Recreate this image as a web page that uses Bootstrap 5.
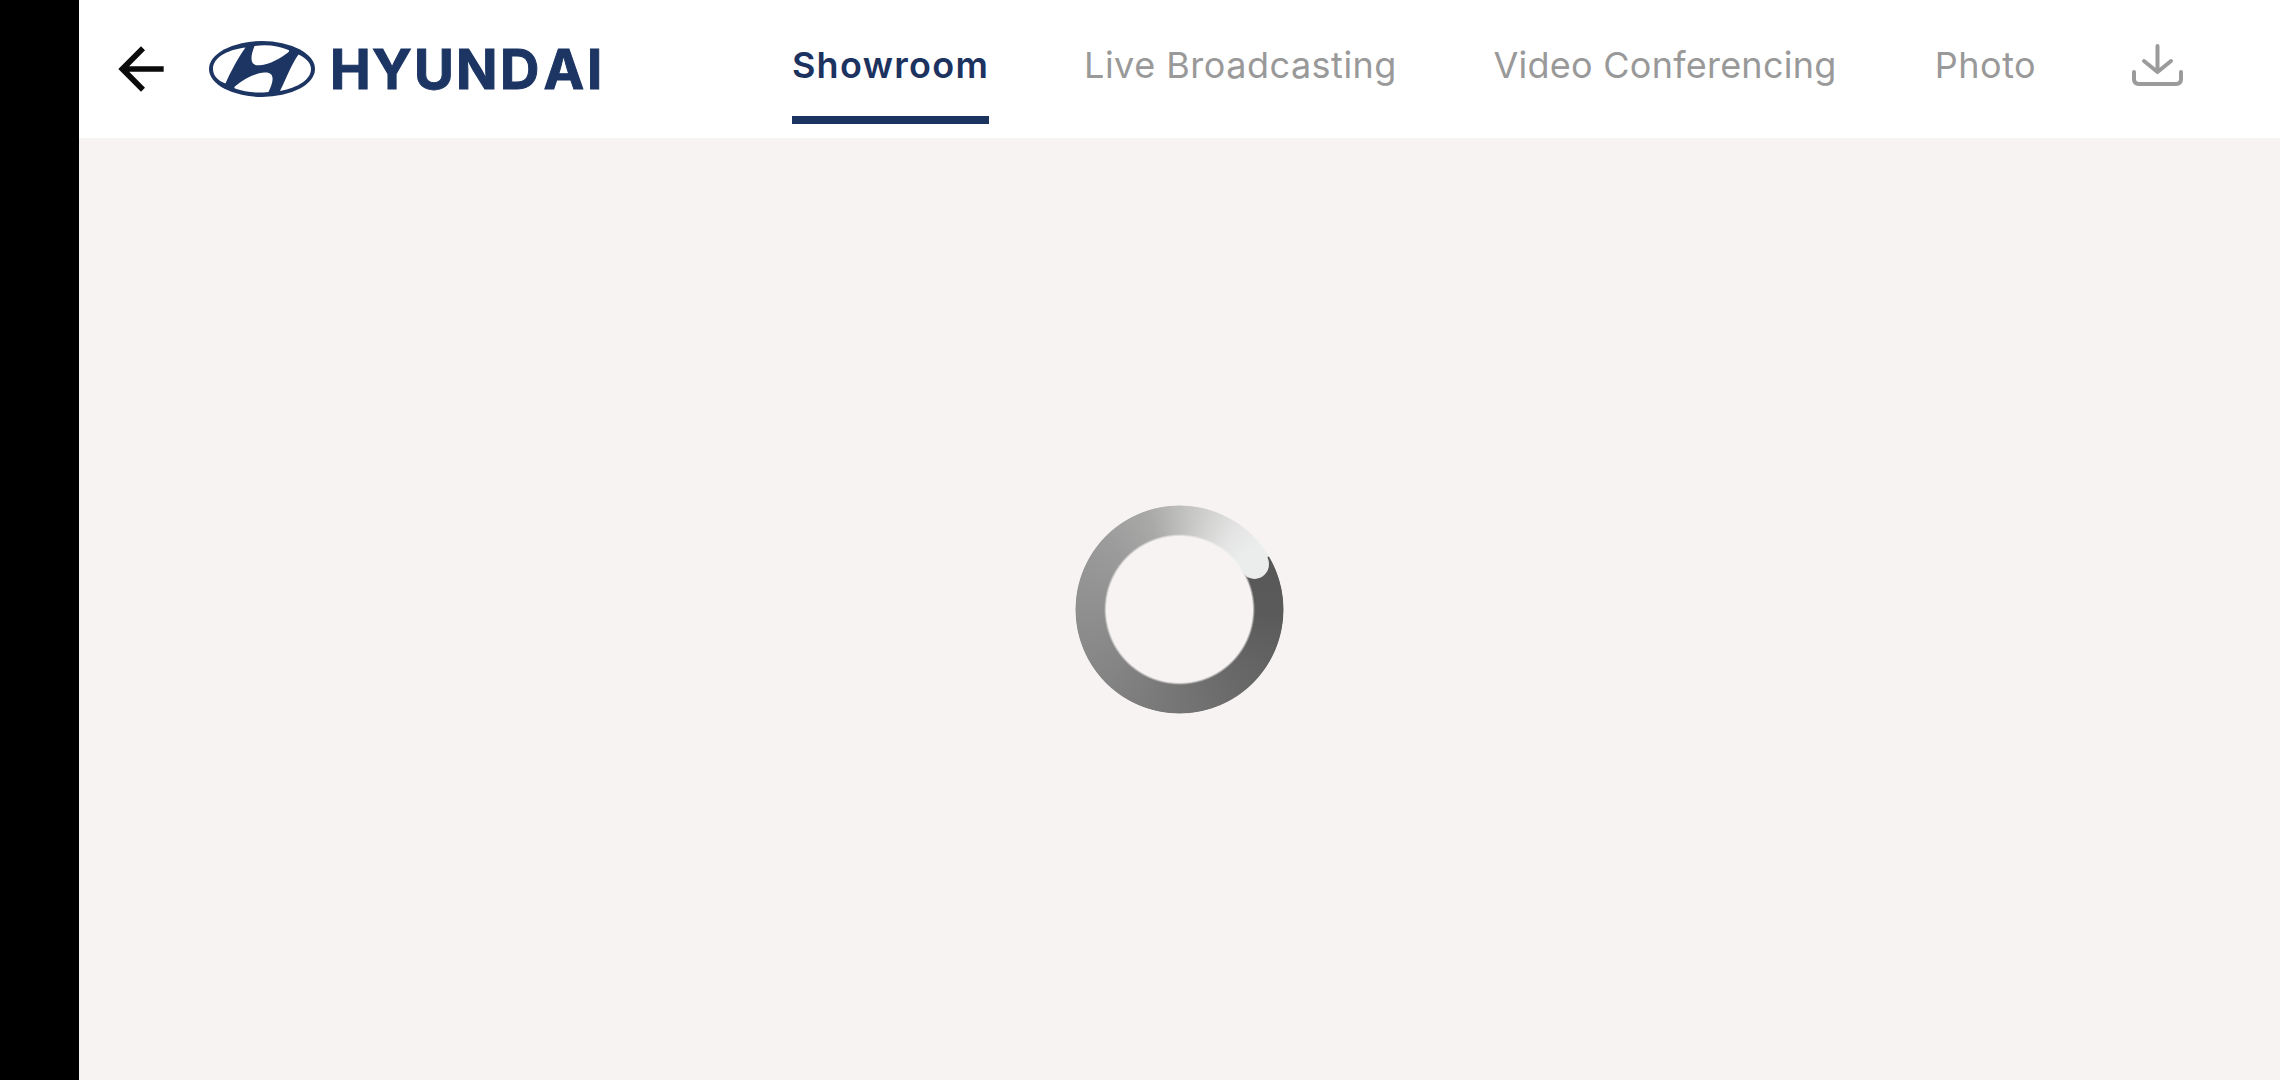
<!DOCTYPE html>
<html lang="en">
<head>
<meta charset="utf-8">
<meta name="viewport" content="width=device-width, initial-scale=1">
<title>Hyundai Showroom</title>
<link href="https://cdn.jsdelivr.net/npm/bootstrap@5.3.0/dist/css/bootstrap.min.css" rel="stylesheet">
<style>
  body { background: #f6f3f2; font-family: Inter, Lato, sans-serif; }
  .side-strip { width: 79px; background: #000; }
  .top-bar { height: 138px; padding: 0 96px 0 28px; }
  .back-btn { width: 68px; height: 68px; }
  .brand-logo { margin-left: 34px; width: 400px; height: 56px; }
  .tabs { gap: 94px; margin-left: 183px; height: 138px; }
  .tab-item { height: 124px; padding: 0; font-size: 36px; line-height: 130px; color: #999 !important; border-bottom: 8px solid transparent; letter-spacing: .5px; white-space: nowrap; display: flex; justify-content: center; }
  .tab-item.active { color: #1c325f !important; border-color: #1c325f; font-weight: 600; letter-spacing: 1.3px; }
  .w-show { width: 197px; } .w-live { width: 315px; } .w-video { width: 346px; letter-spacing: .25px; } .w-photo { width: 107px; }
  .loader-area { padding-right: 1px; }
  .loader-ring { width: 209px; height: 209px; position: relative; }
  .ring-track { width: 209px; height: 209px; border-radius: 50%;
    background: conic-gradient(#bebebd 0deg, #d3d3d2 18deg, #e4e5e4 36deg, #ebedec 50deg, #ebedec 59deg, #575757 59.5deg, #5b5b5b 95deg, #686868 140deg, #757575 180deg, #858585 230deg, #929292 280deg, #9c9c9c 315deg, #a9a9a8 342deg, #bebebd 360deg);
    -webkit-mask: radial-gradient(circle, transparent 73px, #000 75.5px, #000 103.5px, transparent 104.5px);
    mask: radial-gradient(circle, transparent 73px, #000 75.5px, #000 103.5px, transparent 104.5px); }
  .ring-cap { position: absolute; left: 165.500px; top: 44px; width: 29px; height: 30px; border-radius: 50%; background: #ebedec; filter: blur(.7px); }
</style>
<script src="https://cdn.jsdelivr.net/npm/bootstrap@5.3.0/dist/js/bootstrap.bundle.min.js"></script>
</head>
<body>
<div class="d-flex vh-100 overflow-hidden">
  <div class="side-strip flex-shrink-0"></div>
  <div class="d-flex flex-column flex-grow-1">
    <header class="top-bar d-flex align-items-center bg-white flex-shrink-0">
      <a href="#" class="back-btn flex-shrink-0" aria-label="Back">
        <svg class="d-block" width="68" height="68" viewBox="0 0 24 24"><path fill="#0b0b0b" d="M20 11H7.83l5.59-5.59L12 4l-8 8 8 8 1.41-1.41L7.83 13H20v-2z"/></svg>
      </a>
      <a href="#" class="brand-logo flex-shrink-0" aria-label="Hyundai">
        <svg class="d-block overflow-visible" width="400" height="56" viewBox="209 41 400 56">
          <ellipse cx="262" cy="69" rx="53" ry="28" fill="#1c3563"/>
          <g fill="#fff">
            <path d="M245.500 47.500C226 50 213 58 213 69C213 75.500 217.500 80.500 225.500 83.500C231 71 238 58 245.500 47.500Z"/>
            <path d="M298.500 54.500C307 58.500 311 63.500 311 69C311 79 299 87.500 280 91C286 79 291 65 298.500 54.500Z"/>
            <path d="M254.500 46Q273 43.500 288.500 50Q290 51 288 52.500C280 59 270 64 260 65.300C252 66 248.500 61 254.500 46Z"/>
            <path d="M268.500 92Q250 94 235 88.500Q233.500 87.500 235.500 86C244 79 254 73.500 264 72.500C274 71.500 275 79 268.500 92Z"/>
          </g>
          <text x="330 372 414 456 500 543.500 587" y="88.500" font-family="Inter, sans-serif" font-weight="700" font-size="54.500" fill="#1c3563" stroke="#1c3563" stroke-width="1">HYUNDAI</text>
        </svg>
      </a>
      <nav class="tabs nav flex-nowrap align-items-start" aria-label="Sections">
        <a href="#" class="nav-link tab-item active w-show">Showroom</a>
        <a href="#" class="nav-link tab-item w-live">Live Broadcasting</a>
        <a href="#" class="nav-link tab-item w-video">Video Conferencing</a>
        <a href="#" class="nav-link tab-item w-photo">Photo</a>
      </nav>
      <a href="#" class="ms-auto flex-shrink-0 mb-2" aria-label="Download">
        <svg class="d-block" width="53" height="44" viewBox="0 0 53 44" fill="none" stroke="#9b9b9b" stroke-width="4" stroke-linecap="round" stroke-linejoin="round"><path d="M26.500 3V29M13 18l13.500 11L40 18M3 29v7q0 5 5 5h37q5 0 5-5v-7"/></svg>
      </a>
    </header>
    <main class="loader-area flex-grow-1 d-flex align-items-center justify-content-center">
      <div class="loader-ring" role="status" aria-label="Loading">
        <div class="ring-track"></div>
        <div class="ring-cap"></div>
      </div>
    </main>
  </div>
</div>
</body>
</html>
